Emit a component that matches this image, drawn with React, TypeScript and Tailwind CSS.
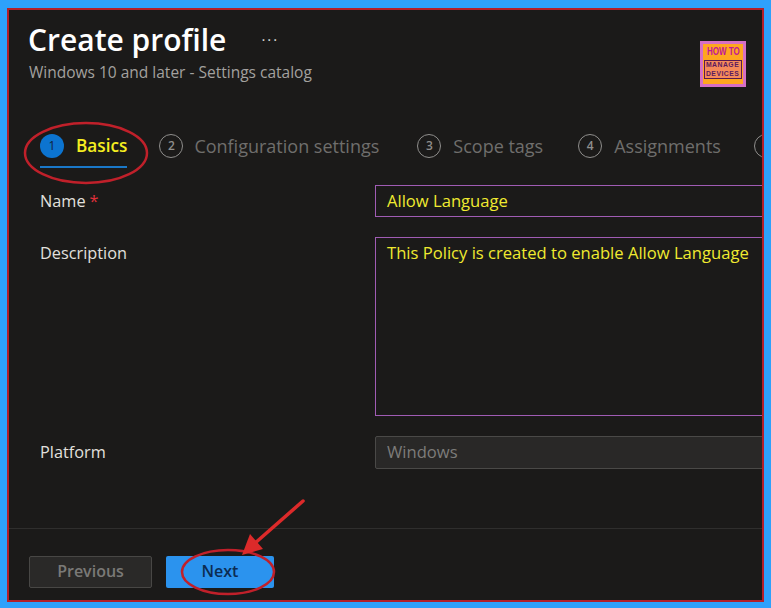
const font = 'font-["Open_Sans","Noto_Sans",sans-serif]'

const steps = [
  { n: 2, label: 'Configuration settings', gap: 'gap-[11px] mr-[38px]' },
  { n: 3, label: 'Scope tags', gap: 'gap-[12px] mr-[35px]' },
  { n: 4, label: 'Assignments', gap: 'gap-[12px] mr-[33px]' },
]

function Logo() {
  return (
    <div className="flex h-[46px] w-[46px] shrink-0 flex-col items-center overflow-hidden border-[3px] border-[#d56fc4] bg-[#ffa61f] pt-[2px]">
      <span className="font-['Liberation_Sans',sans-serif] text-[10px] leading-[12px] font-bold whitespace-nowrap text-[#c0189a] [transform:scaleX(0.8)]">
        HOW TO
      </span>
      <div className="mt-[2px] flex h-[19px] w-[38px] shrink-0 flex-col items-center justify-center border border-[#5a1a50] bg-[#f58a5a] font-['Liberation_Sans',sans-serif] text-[8px] leading-[8.5px] font-bold tracking-[0.6px] whitespace-nowrap text-[#5a1a60]">
        <span className="[transform:scaleX(0.85)]">MANAGE</span>
        <span className="[transform:scaleX(0.85)]">DEVICES</span>
      </div>
    </div>
  )
}

function StepCircle({ n, active }: { n?: number; active?: boolean }) {
  if (active) {
    return (
      <span className="flex h-6 w-6 shrink-0 items-center justify-center rounded-full bg-[#0c74d0] text-[12px] text-[#10233c]">
        {n}
      </span>
    )
  }
  return (
    <span className="flex h-6 w-6 shrink-0 items-center justify-center rounded-full border-[1.5px] border-[#8f8e8c] text-[12px] font-semibold text-[#8f8e8c]">
      {n}
    </span>
  )
}

function Field({ label, required, className, children }: { label: string; required?: boolean; className?: string; children: React.ReactNode }) {
  return (
    <div className={`flex items-start ${className ?? ''}`}>
      <div className="w-[335px] shrink-0 pt-[5px] text-[16.3px] leading-[22px] text-[#e2e0de]">
        {label}
        {required && <span className="ml-[4px] text-[#e0303a]">*</span>}
      </div>
      <div className="w-[500px] shrink-0">{children}</div>
    </div>
  )
}

export default function App() {
  return (
    <div className={`h-[608px] w-[771px] bg-[#2ea1fb] pt-[8px] pr-[7px] pb-[6px] pl-[7px] ${font}`}>
      <div className="relative flex h-full flex-col overflow-hidden border-2 border-[#b3202a] bg-[#1b1a19]">
        <header className="flex shrink-0 items-start justify-between pt-[10px] pr-[16px] pl-[20px]">
          <div>
            <div className="flex items-center">
              <h1 className="-ml-[1px] text-[30px] leading-[40px] font-semibold text-white">Create profile</h1>
              <span className="mb-[1px] ml-[35px] text-[15px] leading-none tracking-[2px] text-[#d8d6d4]">···</span>
            </div>
            <p className="mt-[1px] text-[15.5px] leading-[22px] text-[#a3a19f]">Windows 10 and later - Settings catalog</p>
          </div>
          <div className="mt-[21px]">
            <Logo />
          </div>
        </header>

        <nav className="mt-[47px] flex shrink-0 items-start pl-[31px] text-[18px] leading-[24px] whitespace-nowrap">
          <div className="mr-[32px] flex flex-col">
            <div className="flex items-center gap-[12px]">
              <StepCircle n={1} active />
              <span className="text-[17.2px] font-semibold text-[#f5ee20]">Basics</span>
            </div>
            <div className="mt-[8px] h-[2px] bg-[#1a78c8]" />
          </div>
          {steps.map((s) => (
            <div key={s.n} className={`flex items-center ${s.gap}`}>
              <StepCircle n={s.n} />
              <span className="text-[#6f6e6c]">{s.label}</span>
            </div>
          ))}
          <StepCircle />
        </nav>

        <main className="mt-[17px] flex flex-1 flex-col pl-[31px] text-[16.6px]">
          <Field label="Name" required>
            <div className="flex h-[32px] items-center border border-[#a05cb4] pl-[11px] leading-[22px] text-[#f0ea30]">
              Allow Language
            </div>
          </Field>
          <Field label="Description" className="mt-[20px]">
            <div className="h-[179px] border border-[#a05cb4] pt-[3px] pl-[11px] leading-[24px] text-[#f0ea30]">
              This Policy is created to enable Allow Language
            </div>
          </Field>
          <Field label="Platform" className="mt-[20px]">
            <div className="flex h-[33px] items-center rounded-[2px] border border-[#4a4947] bg-[#292827] pl-[11px] text-[#7d7c7a]">
              Windows
            </div>
          </Field>
        </main>

        <footer className="flex h-[72px] shrink-0 items-start gap-[14px] border-t border-[#2f2e2d] pt-[27px] pl-[20px] text-[16px]">
          <button className="h-[32px] w-[123px] rounded-[2px] border border-[#484745] bg-[#2a2928] pb-[3px] font-semibold text-[#7a7977]">
            Previous
          </button>
          <button className="h-[32px] w-[108px] rounded-[2px] bg-[#2b93ee] pb-[3px] font-semibold text-[#0c2c52]">
            Next
          </button>
        </footer>

        <svg className="pointer-events-none absolute top-[-10px] left-[-9px] h-[608px] w-[771px]" viewBox="0 0 771 608" fill="none">
          <ellipse cx="86" cy="153" rx="61" ry="30" stroke="#c0202a" strokeWidth="2.5" />
          <ellipse cx="228" cy="572" rx="46" ry="22" stroke="#c0202a" strokeWidth="2.5" />
          <path d="M303 501 L254 544" stroke="#dc2a2a" strokeWidth="3.5" strokeLinecap="round" />
          <path d="M242 555 L250 534 L263 549 Z" fill="#dc2a2a" />
        </svg>
      </div>
    </div>
  )
}
